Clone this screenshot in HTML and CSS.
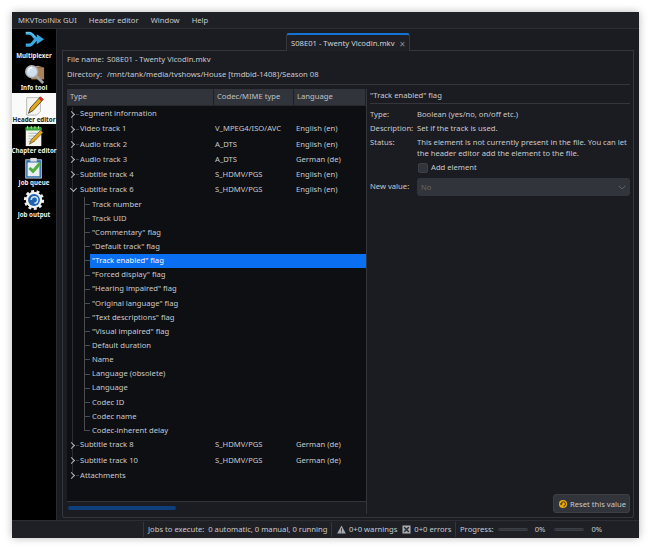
FILE: index.html
```html
<!DOCTYPE html>
<html>
<head>
<meta charset="utf-8">
<title>MKVToolNix GUI</title>
<link rel="stylesheet" href="styles.css">
</head>
<body>
<div class="window">
  <div class="menubar"><span>MKVToolNix GUI</span><span>Header editor</span><span>Window</span><span>Help</span></div>
  <div class="main">
    <nav class="sidebar">
      <div class="tool">
        <svg class="ico" viewBox="0 0 24 24"><path d="M3 3.500h4c4.500 0 4.500 6.500 9 6.500M3 16.500h4c4.500 0 4.500-6.500 9-6.500" fill="none" stroke="#39a7e0" stroke-width="3.400"/><path d="M15 4.500l8 5.500-8 5.500z" fill="#39a7e0"/><path d="M3 3h4c3 0 4 3 6 5" fill="none" stroke="#86d4f6" stroke-width="1"/></svg>
        <span>Multiplexer</span>
      </div>
      <div class="tool">
        <svg class="ico" viewBox="0 0 24 24"><rect x="9" y="6" width="14" height="13" fill="#a9825a"/><path d="M9 6l7-2 7 2" fill="#c29a70"/><path d="M14 15l8 8" stroke="#a4a4a4" stroke-width="3"/><circle cx="9.500" cy="10.500" r="6.500" fill="#cfe0ee" stroke="#b0b0b0" stroke-width="1.600"/><path d="M6 10a4 4 0 0 1 4-4" fill="none" stroke="#fff" stroke-width="1.400"/></svg>
        <span>Info tool</span>
      </div>
      <div class="tool active">
        <svg class="ico" viewBox="0 0 24 24"><path d="M4 4h15v15l-4 4H4z" fill="#f6f6f0" stroke="#999" stroke-width=".7"/><path d="M6 21l2-6L19 3l3 3-11 12z" fill="#e3a71c" stroke="#222" stroke-width=".8"/><path d="M19 3l3 3-2 2-3-3z" fill="#d02b20"/></svg>
        <span>Header editor</span>
      </div>
      <div class="tool">
        <svg class="ico" viewBox="0 0 24 24"><path d="M3 3h17v20H3z" fill="#f4f4ea"/><path d="M3 2h17v4H3z" fill="#3aa53a"/><path d="M5 1v3M9 1v3M13 1v3M17 1v3" stroke="#bfe6b0" stroke-width="1"/><path d="M6 9h11M6 12h11M6 15h9M6 18h7" stroke="#8ab" stroke-width=".8"/><path d="M7 21l2-5 10-10 3 2-10 10z" fill="#e3a71c" stroke="#333" stroke-width=".6"/></svg>
        <span>Chapter editor</span>
      </div>
      <div class="tool">
        <svg class="ico" viewBox="0 0 24 24"><rect x="3" y="3" width="17" height="20" fill="#2c6ea8" stroke="#ccd" stroke-width="1"/><rect x="5" y="6" width="13" height="15" fill="#e8eef2"/><rect x="8" y="1" width="7" height="4" fill="#ddd"/><path d="M6 13l5 5 9-10-3-2-6 7-3-2z" fill="#4fae3c"/></svg>
        <span>Job queue</span>
      </div>
      <div class="tool">
        <svg class="ico" viewBox="0 0 24 24"><circle cx="12" cy="12" r="9" fill="#eee" stroke="#eee" stroke-width="4" stroke-dasharray="3 2.600"/><circle cx="12" cy="12" r="8" fill="#f2f2f2"/><circle cx="12" cy="12" r="6.500" fill="#1f62b0"/><path d="M9 12a3.500 3.500 0 1 1 3.500 3.500" fill="none" stroke="#cfe4f7" stroke-width="1.600"/></svg>
        <span>Job output</span>
      </div>
    </nav>
    <div class="content">
      <div class="tabbar">
        <div class="tab"><span>S08E01 - Twenty Vicodin.mkv</span><span class="close">×</span></div>
      </div>
      <div class="pane">
        <div class="fileinfo">
          <div class="inforow"><span class="lab1">File name:</span><span>S08E01 - Twenty Vicodin.mkv</span></div>
          <div class="inforow"><span class="lab1">Directory:</span><span>/mnt/tank/media/tvshows/House [tmdbid-1408]/Season 08</span></div>
        </div>
        <div class="split">
          <div class="treebox">
            <div class="thead"><span>Type</span><span>Codec/MIME type</span><span>Language</span></div>
            <div class="tbody">
              <div class="row top"><span class="name"><i class="arrow"></i>Segment information</span><span></span><span></span></div>
              <div class="row top"><span class="name"><i class="arrow"></i>Video track 1</span><span>V_MPEG4/ISO/AVC</span><span>English (en)</span></div>
              <div class="row top"><span class="name"><i class="arrow"></i>Audio track 2</span><span>A_DTS</span><span>English (en)</span></div>
              <div class="row top"><span class="name"><i class="arrow"></i>Audio track 3</span><span>A_DTS</span><span>German (de)</span></div>
              <div class="row top"><span class="name"><i class="arrow"></i>Subtitle track 4</span><span>S_HDMV/PGS</span><span>English (en)</span></div>
              <div class="row top"><span class="name"><i class="arrow open"></i>Subtitle track 6</span><span>S_HDMV/PGS</span><span>English (en)</span></div>
              <div class="row child"><span class="leaf">Track number</span></div>
              <div class="row child"><span class="leaf">Track UID</span></div>
              <div class="row child"><span class="leaf">"Commentary" flag</span></div>
              <div class="row child"><span class="leaf">"Default track" flag</span></div>
              <div class="row child selected"><span class="leaf">"Track enabled" flag</span></div>
              <div class="row child"><span class="leaf">"Forced display" flag</span></div>
              <div class="row child"><span class="leaf">"Hearing impaired" flag</span></div>
              <div class="row child"><span class="leaf">"Original language" flag</span></div>
              <div class="row child"><span class="leaf">"Text descriptions" flag</span></div>
              <div class="row child"><span class="leaf">"Visual impaired" flag</span></div>
              <div class="row child"><span class="leaf">Default duration</span></div>
              <div class="row child"><span class="leaf">Name</span></div>
              <div class="row child"><span class="leaf">Language (obsolete)</span></div>
              <div class="row child"><span class="leaf">Language</span></div>
              <div class="row child"><span class="leaf">Codec ID</span></div>
              <div class="row child"><span class="leaf">Codec name</span></div>
              <div class="row child last"><span class="leaf">Codec-inherent delay</span></div>
              <div class="row top"><span class="name"><i class="arrow"></i>Subtitle track 8</span><span>S_HDMV/PGS</span><span>German (de)</span></div>
              <div class="row top"><span class="name"><i class="arrow"></i>Subtitle track 10</span><span>S_HDMV/PGS</span><span>German (de)</span></div>
              <div class="row top end"><span class="name"><i class="arrow"></i>Attachments</span><span></span><span></span></div>
            </div>
            <div class="hscroll"><div class="thumb"></div></div>
          </div>
          <div class="details">
            <div class="dtitle">"Track enabled" flag</div>
            <div class="dgrid">
              <span>Type:</span><span>Boolean (yes/no, on/off etc.)</span>
              <span>Description:</span><span>Set if the track is used.</span>
              <span>Status:</span><span class="wrap">This element is not currently present in the file. You can let the header editor add the element to the file.</span>
              <span></span><label class="check"><i class="box"></i>Add element</label>
              <span class="nvlab">New value:</span>
              <div class="select"><span>No</span><svg class="chev" viewBox="0 0 10 6"><path d="M1 1l4 4 4-4" fill="none" stroke="#6c7076" stroke-width="1"/></svg></div>
            </div>
            <div class="spacer"></div>
            <div class="actions">
              <button class="reset"><svg class="rico" viewBox="0 0 16 16"><circle cx="8" cy="8" r="6.500" fill="#e8a912"/><path d="M5 8a3.500 3.500 0 1 1 3.500 3.500" fill="none" stroke="#4a3208" stroke-width="1.600"/><path d="M2.500 7l2.500 3 2.500-3z" fill="#4a3208"/></svg>Reset this value</button>
            </div>
          </div>
        </div>
      </div>
    </div>
  </div>
  <div class="statusbar">
    <div class="sec jobs">Jobs to execute:&nbsp; 0 automatic, 0 manual, 0 running</div>
    <div class="sec msgs">
      <svg class="sico" viewBox="0 0 10 10"><path d="M5 .5L9.800 9.500H.2z" fill="#a6a9ad"/><path d="M5 3.500v3M5 7.300v1" stroke="#1b1c22" stroke-width=".9"/></svg><span>0+0 warnings</span>
      <svg class="sico err" viewBox="0 0 10 10"><rect x=".5" y=".5" width="9" height="9" fill="#a6a9ad"/><path d="M2.500 2.500l5 5M7.500 2.500l-5 5" stroke="#2a2b30" stroke-width="1.600"/></svg><span>0+0 errors</span>
    </div>
    <div class="sec prog">
      <span>Progress:</span><i class="pbar"></i><span class="pct">0%</span><i class="pbar second"></i><span class="pct">0%</span>
    </div>
  </div>
</div>
</body>
</html>
```
FILE: styles.css
```css
* { box-sizing: border-box; }
html, body { margin: 0; height: 100%; background: #fff; }
body { padding: 12px 11px 12px 12px; font: 7.65px/1 "Noto Sans", sans-serif; color: #c6c9cc; }
.window { width: 627px; height: 526px; background: #1b1c22; display: flex; flex-direction: column; box-shadow: 0 0 8px rgba(0,0,0,.28); overflow: hidden; }
.menubar { height: 17px; flex: none; display: flex; align-items: center; gap: 12px; padding: 1px 0 0 6px; background: #1f2026; border-bottom: 1px solid #2c2e34; }
.main { flex: 1; display: flex; min-height: 0; }
.sidebar { width: 45px; flex: none; background: #000; display: flex; flex-direction: column; border-right: 1px solid #2a2b30; }
.tool { height: 31.8px; display: flex; flex-direction: column; align-items: center; font-size: 6.2px; font-weight: 700; color: #eee; line-height: 8px; white-space: nowrap; padding-top: 1px; }
.tool .ico { width: 22px; height: 22px; flex: none; }
.tool.active { background: #fafafa; color: #222; }
.content { flex: 1; min-width: 0; display: flex; flex-direction: column; padding: 4px 5px 2px 5px; }
.tabbar { height: 18px; flex: none; display: flex; padding-left: 224px; border-bottom: 1px solid #34363c; }
.tab { height: 18px; width: 124px; display: flex; align-items: center; gap: 5px; padding: 1px 0 0 4px; background: #1f2026; border: 1px solid #34363c; border-top: 2px solid #1673d6; border-bottom: 0; border-radius: 3px 3px 0 0; white-space: nowrap; color: #d0d2d4; }
.close { font-size: 10px; color: #8a8d91; }
.pane { flex: 1; min-height: 0; border: 1px solid #34363c; border-top: 0; border-radius: 0 0 3px 3px; padding: 0 3px 3px 4px; display: flex; flex-direction: column; }
.fileinfo { height: 34px; flex: none; display: flex; flex-direction: column; padding-top: 1px; border-bottom: 1px solid #34363c; }
.inforow { height: 15px; display: flex; align-items: center; }
.lab1 { width: 40px; flex: none; }
.split { flex: 1; min-height: 0; display: flex; gap: 1px; padding-top: 4px; }
.treebox { width: 300px; flex: none; display: flex; flex-direction: column; background: #0e0f12; border-right: 1px solid #33353a; }
.thead { height: 17px; flex: none; display: grid; grid-template-columns: 147px 80px 72px; background: #31343b; border-bottom: 1px solid #26282d; }
.thead span { display: flex; align-items: center; padding-left: 3px; border-right: 1px solid #1e2025; color: #bfc2c5; }
.tbody { flex: 1; min-height: 0; padding-top: .5px; }
.row { display: grid; grid-template-columns: 148px 81px 70px; align-items: center; white-space: nowrap; }
.row.top { height: 15.15px; background: linear-gradient(#2c2e32,#2c2e32) 5px 0/1px 100% no-repeat; }
.row.top.end { background: linear-gradient(#2c2e32,#2c2e32) 5px 0/1px 50% no-repeat; }
.row.child { height: 14.15px; display: flex; padding-left: 23px; background: linear-gradient(#2c2e32,#2c2e32) 5px 0/1px 100% no-repeat, linear-gradient(#4a4c50,#4a4c50) 17px 0/1px 100% no-repeat, linear-gradient(#4a4c50,#4a4c50) 17px 50%/6px 1px no-repeat; }
.row.child.last { background: linear-gradient(#2c2e32,#2c2e32) 5px 0/1px 100% no-repeat, linear-gradient(#4a4c50,#4a4c50) 17px 0/1px 50% no-repeat, linear-gradient(#4a4c50,#4a4c50) 17px 50%/6px 1px no-repeat; }
.name { display: flex; align-items: center; }
.row.top .name { padding-left: 3px; }
.arrow { width: 10px; height: 9px; flex: none; background: linear-gradient(#3e4044,#3e4044) 6px 50%/3px 1px no-repeat; display: flex; align-items: center; }
.arrow::before { content: ""; width: 4px; height: 4px; border-top: 1px solid #b4b6b9; border-right: 1px solid #b4b6b9; transform: rotate(45deg); margin-left: -1px; }
.arrow.open { background: none; }
.arrow.open::before { transform: rotate(135deg); margin: -2px 0 0 1px; }
.leaf { display: flex; align-items: center; height: 100%; padding-left: 2px; }
.row.selected .leaf { background: #0a6ff0; color: #f2f5fa; width: 276px; }
.hscroll { height: 13px; flex: none; border-top: 1px solid #33353a; background: #1b1c22; padding: 4px 1px 0; }
.thumb { width: 108px; height: 4px; border-radius: 2px; background: #0e3f7a; }
.details { flex: 1; min-width: 0; display: flex; flex-direction: column; padding-left: 2px; }
.dtitle { height: 15px; flex: none; display: flex; align-items: center; border-bottom: 1px solid #34363c; margin-bottom: 5px; }
.dgrid { display: grid; grid-template-columns: 47px 1fr; row-gap: 3px; line-height: 11px; }
.wrap { line-height: 10.6px; }
.check { display: flex; align-items: center; gap: 3px; height: 11px; margin: 1px 0 0 1px; }
.box { width: 10px; height: 10px; background: #31343b; border-radius: 2px; border: 1px solid #3c3f45; }
.nvlab { align-self: center; }
.select { height: 18px; margin-top: 2px; background: #31343b; border-radius: 3px; display: flex; align-items: center; justify-content: space-between; padding: 0 4px; color: #64676c; }
.chev { width: 8px; height: 5px; }
.spacer { flex: 1; }
.actions { display: flex; justify-content: flex-end; padding-bottom: 1px; }
.reset { height: 19px; width: 77px; display: flex; align-items: center; gap: 2px; padding: 0 4px; background: #31343b; border: 1px solid #3c3f45; border-radius: 3px; color: #c6c9cc; font: 7.65px "Noto Sans", sans-serif; white-space: nowrap; }
.rico { width: 10px; height: 10px; flex: none; }
.statusbar { height: 18px; flex: none; display: flex; align-items: center; padding: 1px 0 1px 131px; background: #1f2026; border-top: 1px solid #2c2e34; white-space: nowrap; }
.sec { height: 100%; display: flex; align-items: center; padding-left: 4px; border-left: 1px solid #34363c; }
.jobs { width: 188px; }
.msgs { width: 124px; gap: 3px; padding-left: 5px; }
.sico { width: 9px; height: 9px; flex: none; }
.sico.err { margin-left: 2px; }
.prog { padding-left: 4px; }
.pbar { width: 30px; height: 3.5px; background: #31343b; border: 1px solid #3c3f45; border-radius: 2px; margin: 0 7px 0 4px; }
.pbar.second { margin: 0 7px 0 9px; }
```
